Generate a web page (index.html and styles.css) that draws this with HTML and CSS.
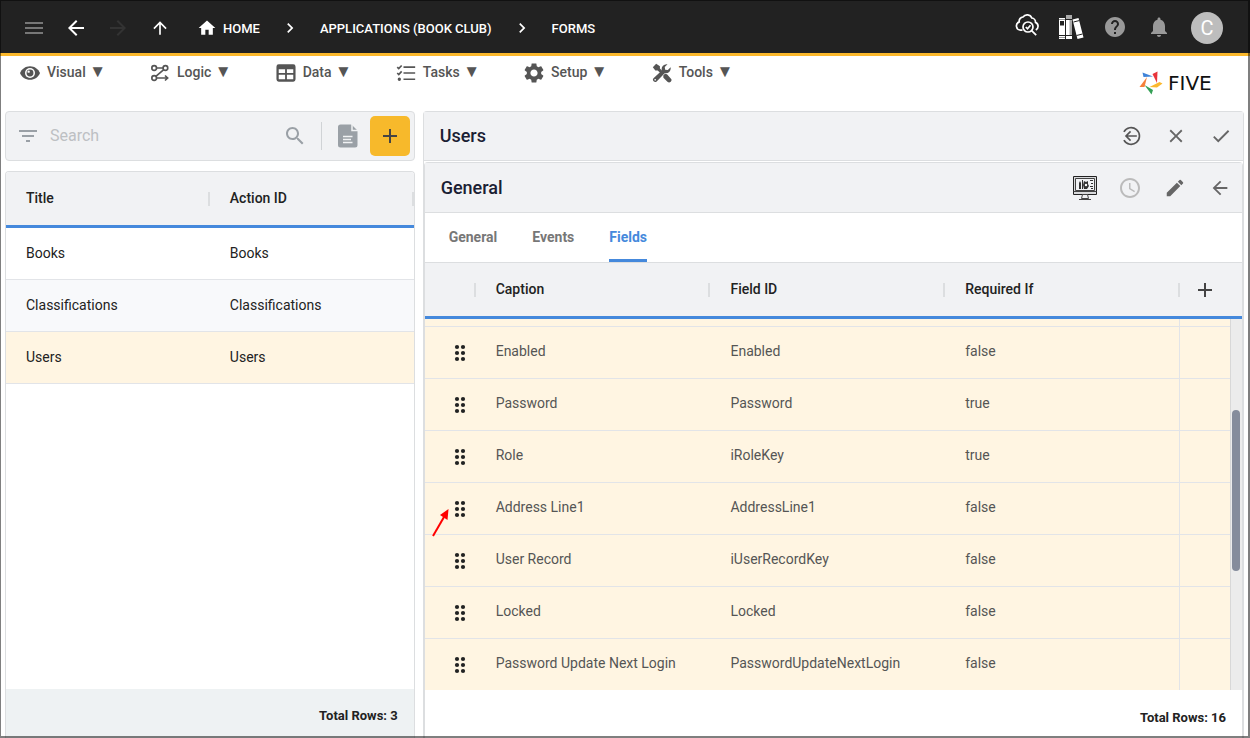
FILE: index.html
```
<!DOCTYPE html>
<html lang="en">

<head>
    <meta charset="UTF-8">
    <meta name="viewport" content="width=device-width, initial-scale=1.0">
    <title>Five - Forms</title>
    <link rel="stylesheet" href="styles.css">
</head>

<body>

    <!-- shared icons -->
    <svg class="sprite" aria-hidden="true">
        <symbol id="i-back" viewBox="0 0 24 24"><path d="M20 11H7.83l5.59-5.59L12 4l-8 8 8 8 1.41-1.41L7.83 13H20v-2z"/></symbol>
        <symbol id="i-chevron" viewBox="0 0 24 24"><path d="M10 6 8.59 7.41 13.17 12l-4.58 4.59L10 18l6-6z"/></symbol>
        <symbol id="i-add" viewBox="0 0 24 24"><path d="M19 13h-6v6h-2v-6H5v-2h6V5h2v6h6v2z"/></symbol>
        <symbol id="i-drag" viewBox="0 0 12 18">
            <circle cx="3" cy="3" r="2.1"/><circle cx="9" cy="3" r="2.1"/>
            <circle cx="3" cy="9" r="2.1"/><circle cx="9" cy="9" r="2.1"/>
            <circle cx="3" cy="15" r="2.1"/><circle cx="9" cy="15" r="2.1"/>
        </symbol>
    </svg>

    <header class="topbar">
        <nav class="topbar-nav">
            <button type="button" class="icon-btn dim" aria-label="Menu">
                <svg viewBox="0 0 24 24"><path d="M3 18h18v-2H3v2zm0-5h18v-2H3v2zm0-7v2h18V6H3z"/></svg>
            </button>
            <button type="button" class="icon-btn" aria-label="Back"><svg><use href="#i-back"/></svg></button>
            <button type="button" class="icon-btn off" aria-label="Forward">
                <svg viewBox="0 0 24 24"><path d="m12 4-1.41 1.41L16.17 11H4v2h12.17l-5.58 5.59L12 20l8-8z"/></svg>
            </button>
            <button type="button" class="icon-btn up" aria-label="Up">
                <svg viewBox="0 0 24 24"><path d="m4 12 1.41 1.41L11 7.83V20h2V7.83l5.58 5.59L20 12l-8-8-8 8z"/></svg>
            </button>
        </nav>
        <nav class="breadcrumb">
            <a href="#" class="home">
                <svg viewBox="0 0 24 24"><path d="M10 20v-6h4v6h5v-8h3L12 3 2 12h3v8z"/></svg>HOME
            </a>
            <svg><use href="#i-chevron"/></svg>
            <a href="#">APPLICATIONS (BOOK CLUB)</a>
            <svg><use href="#i-chevron"/></svg>
            <a href="#">FORMS</a>
        </nav>
        <div class="topbar-tools">
            <button type="button" class="icon-btn" aria-label="Inspect">
                <svg class="line" viewBox="0 0 24 24">
                    <path d="M7.500 17.200H5.400A4.300 4.300 0 0 1 4.200 8.900 4.200 4.200 0 0 1 8 4a5 5 0 0 1 8.800 1 4.200 4.200 0 0 1 3.700 4.400 4.200 4.200 0 0 1 .3 7.600"/>
                    <circle cx="13" cy="14" r="5"/>
                    <path d="m10.800 14 1.700 1.700 3-3.500M16.600 17.600l4.600 4.600"/>
                </svg>
            </button>
            <button type="button" class="icon-btn books" aria-label="Library">
                <svg viewBox="0 0 26 26">
                    <path fill="#fff" d="M1 4h6v21H1zM8 1h6v24H8zM14.500 5.500l6-1.500 5 19.500-6 1.500z"/>
                    <path fill="#aaa" d="M8 1h6v4H8zM11.500 6h2.500v15h-2.500z"/>
                    <path fill="#222" d="M2 7h4v4.500H2z"/>
                    <path fill="none" stroke="#222" d="M1 21.500h13M8 5.500h6M15.500 8l6-1.500M18.500 21.500l6-1.500"/>
                    <path fill="none" stroke="#999" d="M1 5.500h6M1 23.500h6"/>
                </svg>
            </button>
            <button type="button" class="icon-btn grey" aria-label="Help">
                <svg viewBox="0 0 24 24"><path d="M12 2C6.480 2 2 6.480 2 12s4.480 10 10 10 10-4.480 10-10S17.520 2 12 2zm1 17h-2v-2h2v2zm2.070-7.750-.9.920C13.450 12.900 13 13.500 13 15h-2v-.5c0-1.100.450-2.100 1.170-2.830l1.240-1.260c.370-.360.590-.860.590-1.410 0-1.100-.9-2-2-2s-2 .9-2 2H8c0-2.210 1.790-4 4-4s4 1.790 4 4c0 .880-.360 1.680-.930 2.250z"/></svg>
            </button>
            <button type="button" class="icon-btn grey" aria-label="Notifications">
                <svg viewBox="0 0 24 24"><path d="M12 22c1.100 0 2-.9 2-2h-4c0 1.100.9 2 2 2zm6-6v-5c0-3.070-1.630-5.640-4.500-6.320V4c0-.830-.670-1.500-1.500-1.500s-1.500.670-1.500 1.500v.680C7.640 5.360 6 7.920 6 11v5l-2 2v1h16v-1l-2-2z"/></svg>
            </button>
            <button type="button" class="avatar">C</button>
        </div>
    </header>

    <div class="menubar">
        <button type="button">
            <svg viewBox="1 1 22 22"><path d="M12 4.500C7 4.500 2.730 7.610 1 12c1.730 4.390 6 7.500 11 7.500s9.270-3.110 11-7.500c-1.730-4.390-6-7.500-11-7.500z"/><circle cx="12" cy="12" r="5.500" fill="#fff"/><circle cx="12" cy="12" r="3.800"/><circle cx="10.500" cy="10.500" r="1.300" fill="#fff"/></svg>
            <span>Visual <i>▼</i></span>
        </button>
        <button type="button">
            <svg class="line" viewBox="0 0 24 24">
                <circle cx="5" cy="6" r="2.800"/><circle cx="18.500" cy="6" r="2.800"/><circle cx="5" cy="18" r="2.800"/>
                <path d="M7.800 6h8M16.500 8 7 16M7.800 18H21M18 15l3.200 3-3.200 3"/>
            </svg>
            <span>Logic <i>▼</i></span>
        </button>
        <button type="button">
            <svg viewBox="1 1 22 22"><path fill-rule="evenodd" d="M4 2.500h16a2.500 2.500 0 0 1 2.500 2.500v14a2.500 2.500 0 0 1-2.500 2.500H4A2.500 2.500 0 0 1 1.500 19V5A2.500 2.500 0 0 1 4 2.500zM4 8v4h7V8zm9 0v4h7V8zm-9 6v5h7v-5zm9 0v5h7v-5z"/></svg>
            <span>Data <i>▼</i></span>
        </button>
        <button type="button">
            <svg class="line" viewBox="0 0 24 24">
                <path d="M9 5h14M9 12h14M9 19.500h14"/>
                <path d="m1.500 5 1.800 1.800L6.800 3M1.500 12l1.800 1.800L6.800 10"/>
                <circle cx="4" cy="19.500" r="1"/>
            </svg>
            <span>Tasks <i>▼</i></span>
        </button>
        <button type="button">
            <svg viewBox="2 2 20 20"><path d="M19.140 12.940c.040-.3.060-.610.060-.940 0-.320-.020-.640-.070-.940l2.030-1.580c.180-.140.230-.410.120-.610l-1.920-3.320c-.120-.220-.370-.290-.590-.220l-2.390.960c-.5-.380-1.030-.7-1.620-.940l-.360-2.540c-.040-.240-.240-.410-.480-.410h-3.840c-.240 0-.430.170-.470.410l-.360 2.540c-.590.240-1.130.570-1.620.940l-2.390-.960c-.220-.080-.470 0-.590.220L2.740 8.870c-.120.210-.080.470.120.610l2.030 1.580c-.050.3-.090.630-.090.940s.020.640.070.940l-2.030 1.580c-.180.140-.230.410-.120.610l1.920 3.320c.120.220.370.290.590.220l2.390-.960c.5.380 1.030.7 1.620.940l.360 2.540c.050.240.240.410.480.410h3.840c.240 0 .440-.170.470-.410l.360-2.540c.590-.240 1.130-.560 1.620-.940l2.390.960c.220.080.470 0 .590-.220l1.920-3.320c.120-.220.070-.470-.120-.610l-2.010-1.580zM12 15.600c-1.980 0-3.600-1.620-3.600-3.600s1.620-3.600 3.600-3.600 3.600 1.620 3.600 3.600-1.620 3.600-3.600 3.600z"/></svg>
            <span>Setup <i>▼</i></span>
        </button>
        <button type="button">
            <svg viewBox="0 0 24 24">
                <path d="M1 5 5 1l4.500 3v2.500l3 3-2.500 2.500-3.200-3H4z"/>
                <path d="m13.500 15 2-2 2.500.5 4.500 5a2.700 2.700 0 0 1-4 4l-4.800-4.800z"/>
                <path d="M22.300 5.200 19 8.500 15.800 8l-.5-3.200 3.300-3.300A6 6 0 0 0 11.800 9L1.800 18.400a2.700 2.700 0 0 0 3.800 3.800L15.200 12.300a6 6 0 0 0 7.100-7.100zM3.800 21.200a1 1 0 1 1 0-2 1 1 0 0 1 0 2z"/>
            </svg>
            <span>Tools <i>▼</i></span>
        </button>
        <a href="#" class="logo">
            <svg viewBox="0 0 24 24">
                <path fill="#3f83d8" d="M3.500 1.500 14 5.500 4.500 6z"/>
                <path fill="#e8343b" d="m18.500.5-.5 11.500-4.500-9z"/>
                <path fill="#fbb82e" d="m23.500 12.500-5.500 4-7.500-.5L20.500 11z"/>
                <path fill="#34a056" d="m5.500 14 8.500 5-1.500 4.500z"/>
                <path fill="#f5803a" d="M8 6 5.500 16 .5 16z"/>
            </svg>
            <span>FIVE</span>
        </a>
    </div>

    <main class="content">

        <section class="list-pane">
            <form class="search-card">
                <svg class="filter" viewBox="0 0 24 24"><path d="M10 18h4v-2h-4v2zM3 6v2h18V6H3zm3 7h12v-2H6v2z"/></svg>
                <input type="text" placeholder="Search" aria-label="Search">
                <button type="submit" class="icon-btn" aria-label="Search">
                    <svg viewBox="0 0 24 24"><path d="M15.500 14h-.790l-.280-.270C15.410 12.590 16 11.110 16 9.500 16 5.910 13.090 3 9.500 3S3 5.910 3 9.500 5.910 16 9.500 16c1.610 0 3.090-.590 4.230-1.570l.270.280v.790l5 4.990L20.490 19l-4.990-5zm-6 0C7.010 14 5 11.990 5 9.500S7.010 5 9.500 5 14 7.010 14 9.500 11.990 14 9.500 14z"/></svg>
                </button>
                <span class="divider"></span>
                <button type="button" class="icon-btn report" aria-label="Report">
                    <svg viewBox="0 0 24 24"><path d="M4.500.5h11l6 6V21a2.500 2.500 0 0 1-2.500 2.500H4.500A2.500 2.500 0 0 1 2 21V3A2.500 2.500 0 0 1 4.500.5z"/><path fill="none" stroke="#f1f2f4" stroke-width="1.500" d="M16 0v6.500h6M7 12.500h9.500M7 15.500h8M7 18.500h9.500"/></svg>
                </button>
                <button type="button" class="add-btn" aria-label="Add"><svg><use href="#i-add"/></svg></button>
            </form>

            <div class="list-card">
                <table>
                    <thead>
                        <tr><th>Title</th><th>Action ID</th></tr>
                    </thead>
                    <tbody>
                        <tr><td>Books</td><td>Books</td></tr>
                        <tr class="odd"><td>Classifications</td><td>Classifications</td></tr>
                        <tr class="selected"><td>Users</td><td>Users</td></tr>
                    </tbody>
                </table>
                <footer>Total Rows: 3</footer>
            </div>
        </section>

        <section class="detail-pane">
            <div class="pane-head">
                <h1>Users</h1>
                <button type="button" class="icon-btn" aria-label="Return">
                    <svg class="line" viewBox="0 0 24 24"><path d="M3.500 7a10 10 0 1 1 0 10M19 12H6M11.500 6.500 6 12l5.500 5.500"/></svg>
                </button>
                <button type="button" class="icon-btn" aria-label="Cancel">
                    <svg viewBox="0 0 24 24"><path d="M19 6.410 17.590 5 12 10.590 6.410 5 5 6.410 10.590 12 5 17.590 6.410 19 12 13.410 17.590 19 19 17.590 13.410 12z"/></svg>
                </button>
                <button type="button" class="icon-btn" aria-label="Save">
                    <svg viewBox="0 0 24 24"><path d="M9 16.170 4.830 12l-1.420 1.410L9 19 21 7l-1.410-1.410z"/></svg>
                </button>
            </div>

            <div class="detail-card">
                <div class="pane-head">
                    <h2>General</h2>
                    <button type="button" class="icon-btn monitor" aria-label="Preview">
                        <svg viewBox="0 0 26 26">
                            <path fill="#d9dadc" stroke="#222" d="M1.500 1.500h23v18h-23z"/>
                            <path fill="#f1f2f4" stroke="#444" d="M3.500 3.500h19v12h-19zM10.500 19.500h5l1 4h-7z"/>
                            <path fill="none" stroke="#444" d="M1.500 16.500h23M7 24.500h12"/>
                            <path fill="#333" d="M7 8l1-2 1 2v6H7zM10 5h1v9h-1zM12 6l2 1 2-1v3l1 2-2 3h-3l-1-4zM18 5h3v1h-3zM19 8h2v1h-2zM18 11h3v1h-3zM19 13h2v1h-2z"/>
                            <circle cx="14" cy="10" r="1.200" fill="#fff"/>
                        </svg>
                    </button>
                    <button type="button" class="icon-btn pale" aria-label="History">
                        <svg viewBox="0 0 24 24"><path d="M11.990 2C6.470 2 2 6.480 2 12s4.470 10 9.990 10C17.520 22 22 17.520 22 12S17.520 2 11.990 2zM12 20c-4.420 0-8-3.580-8-8s3.580-8 8-8 8 3.580 8 8-3.580 8-8 8zm.5-13H11v6l5.250 3.150.750-1.230-4.500-2.670z"/></svg>
                    </button>
                    <button type="button" class="icon-btn" aria-label="Edit">
                        <svg viewBox="0 0 24 24"><path d="M3 17.250V21h3.750L17.810 9.940l-3.750-3.750L3 17.250zM20.710 7.040c.390-.390.390-1.020 0-1.410l-2.340-2.340a.996.996 0 0 0-1.410 0l-1.830 1.830 3.750 3.750 1.830-1.830z"/></svg>
                    </button>
                    <button type="button" class="icon-btn" aria-label="Back"><svg><use href="#i-back"/></svg></button>
                </div>

                <nav class="tabs">
                    <button type="button">General</button>
                    <button type="button">Events</button>
                    <button type="button" class="active">Fields</button>
                </nav>

                <div class="grid">
                    <table>
                        <colgroup>
                            <col class="col-drag"><col><col><col><col class="col-add">
                        </colgroup>
                        <thead>
                            <tr>
                                <th></th>
                                <th>Caption</th>
                                <th>Field ID</th>
                                <th>Required If</th>
                                <th><button type="button" class="icon-btn" aria-label="Add field"><svg><use href="#i-add"/></svg></button></th>
                            </tr>
                        </thead>
                        <tbody>
                            <tr class="cut"><td></td><td></td><td></td><td></td><td></td></tr>
                            <tr><td><svg><use href="#i-drag"/></svg></td><td>Enabled</td><td>Enabled</td><td>false</td><td></td></tr>
                            <tr><td><svg><use href="#i-drag"/></svg></td><td>Password</td><td>Password</td><td>true</td><td></td></tr>
                            <tr><td><svg><use href="#i-drag"/></svg></td><td>Role</td><td>iRoleKey</td><td>true</td><td></td></tr>
                            <tr>
                                <td class="marked">
                                    <svg><use href="#i-drag"/></svg>
                                    <svg class="pointer" viewBox="0 0 20 30"><path fill="none" stroke="#f00" stroke-width="2" d="M2 28 13 9"/><path fill="#f00" d="m17.500 1-8.500 6 7.500 5z"/></svg>
                                </td>
                                <td>Address Line1</td><td>AddressLine1</td><td>false</td><td></td>
                            </tr>
                            <tr><td><svg><use href="#i-drag"/></svg></td><td>User Record</td><td>iUserRecordKey</td><td>false</td><td></td></tr>
                            <tr><td><svg><use href="#i-drag"/></svg></td><td>Locked</td><td>Locked</td><td>false</td><td></td></tr>
                            <tr><td><svg><use href="#i-drag"/></svg></td><td>Password Update Next Login</td><td>PasswordUpdateNextLogin</td><td>false</td><td></td></tr>
                        </tbody>
                    </table>
                    <div class="scrollbar"><div class="thumb"></div></div>
                </div>
                <footer>Total Rows: 16</footer>
            </div>
        </section>

    </main>

</body>

</html>
```

FILE: styles.css
```
* {
    box-sizing: border-box;
}

body {
    margin: 0;
    height: 100vh;
    display: flex;
    flex-direction: column;
    overflow: hidden;
    background-color: #fff;
    color: #222;
    font-family: Roboto, "Liberation Sans", sans-serif;
    font-size: 14px;
}

/* window outline */
body::after {
    content: "";
    position: fixed;
    inset: 0;
    border: solid rgba(0, 0, 0, 0.5);
    border-width: 1px 2px 2px 1px;
    pointer-events: none;
    z-index: 5;
}

button {
    border: none;
    padding: 0;
    background: none;
    color: inherit;
    font: inherit;
    cursor: pointer;
}

a {
    color: inherit;
    text-decoration: none;
}

svg {
    display: block;
    flex: none;
    width: 24px;
    height: 24px;
    fill: currentColor;
}

svg.line {
    fill: none;
    stroke: currentColor;
    stroke-width: 2;
}

.sprite {
    position: absolute;
    width: 0;
    height: 0;
}

.icon-btn {
    display: flex;
    align-items: center;
    justify-content: center;
    flex: none;
    width: 44px;
    height: 40px;
}

/* top bar */
.topbar {
    display: flex;
    align-items: center;
    flex: none;
    height: 56px;
    padding: 0 22px 0 12px;
    background-color: #222;
    border-bottom: 3px solid #fbb82b;
    color: #fff;
}

.topbar-nav {
    display: flex;
    padding-top: 3px;
}

.topbar-nav .icon-btn {
    width: 42px;
}

.topbar .up svg {
    width: 20px;
    height: 20px;
}

.topbar-nav .dim {
    width: 43px;
    color: #777;
}

.topbar .off {
    color: #333;
}

.breadcrumb {
    display: flex;
    align-items: center;
    gap: 18px;
    padding-top: 3px;
    margin-left: 16px;
    font-size: 13px;
    font-weight: 500;
}

.breadcrumb .home {
    display: flex;
    align-items: center;
    gap: 6px;
}

.breadcrumb svg {
    width: 20px;
    height: 20px;
}

.breadcrumb > svg {
    margin: 0 2px;
}

.topbar-tools {
    display: flex;
    align-items: center;
    margin-left: auto;
}

.topbar-tools svg.line {
    margin-bottom: 4px;
    stroke-width: 1.7;
}

.books svg,
.monitor svg {
    width: 26px;
    height: 26px;
}

.topbar-tools .grey {
    color: #999;
}

.avatar {
    width: 32px;
    height: 32px;
    margin: 2px 5px 0 10px;
    border-radius: 50%;
    background-color: #bdbdbd;
    font-size: 20px;
}

/* menu bar */
.menubar {
    display: flex;
    align-items: flex-start;
    gap: 44px;
    flex: none;
    height: 55px;
    padding: 7px 22px 0 20px;
    color: #555;
}

.menubar button {
    display: flex;
    align-items: center;
    gap: 7px;
    font-weight: 500;
}

.menubar button span {
    height: 20px;
    line-height: 18px;
}

.menubar i {
    font-size: 17px;
    font-style: normal;
    line-height: 1;
}

.menubar svg {
    width: 20px;
    height: 20px;
}

.logo {
    display: flex;
    align-items: center;
    gap: 5px;
    width: 89px;
    margin: 8px 0 0 auto;
    color: #111;
    font-family: "DejaVu Sans", sans-serif;
    font-size: 20px;
}

.menubar .logo svg {
    width: 24px;
    height: 24px;
}

/* panes */
.content {
    display: flex;
    flex: 1;
    gap: 8px;
    min-height: 0;
    padding: 0 6px 0 5px;
}

.list-pane {
    display: flex;
    flex-direction: column;
    flex: 1;
    gap: 10px;
}

.search-card {
    display: flex;
    align-items: center;
    flex: none;
    height: 50px;
    padding: 0 4px 0 10px;
    border: 1px solid #dcdee0;
    border-radius: 4px;
    background-color: #f1f2f4;
    color: #9aa0a6;
}

.search-card input {
    flex: 1;
    min-width: 0;
    padding: 0 10px 2px;
    border: none;
    outline: none;
    background: none;
    font: inherit;
    font-size: 16px;
}

.search-card input::placeholder {
    color: #bdc0c3;
}

.divider {
    width: 1px;
    height: 28px;
    margin-left: 4px;
    background-color: #d0d3d6;
}

.search-card .report {
    width: 48px;
    padding-left: 4px;
}

.add-btn {
    display: flex;
    align-items: center;
    justify-content: center;
    width: 40px;
    height: 40px;
    border-radius: 5px;
    background-color: #f7b92b;
    color: #444;
}

.list-card {
    display: flex;
    flex-direction: column;
    flex: 1;
    border: 1px solid #dcdee0;
    border-bottom: none;
    border-radius: 4px 4px 0 0;
    overflow: hidden;
}

footer {
    flex: none;
    height: 48px;
    padding: 0 16px;
    font-size: 13px;
    font-weight: 700;
    line-height: 55px;
    text-align: right;
}

.list-card footer {
    height: 49px;
    margin-top: auto;
    background-color: #eef2f3;
    line-height: 53px;
}

/* tables */
table {
    width: 100%;
    table-layout: fixed;
    border-collapse: separate;
    border-spacing: 0;
}

th,
td {
    height: 52px;
    padding: 0 20px 2px;
    text-align: left;
    border-bottom: 1px solid #e2e4e8;
    white-space: nowrap;
}

th {
    height: 56px;
    font-weight: 500;
    background: linear-gradient(#dcdee0, #dcdee0) right center / 2px 14px no-repeat #f1f2f4;
    border-bottom: 3px solid #4589dc;
}

.odd td {
    background-color: #f8f9fb;
}

.selected td {
    background-color: #fff5e2;
}

/* detail */
.detail-pane {
    display: flex;
    flex-direction: column;
    flex: 2;
    border: 1px solid #dcdee0;
    border-bottom: none;
    border-radius: 4px 4px 0 0;
}

.pane-head {
    display: flex;
    align-items: center;
    flex: none;
    height: 49px;
    padding: 0 0 0 16px;
    background-color: #f1f2f4;
    border-bottom: 1px solid #dcdee0;
    color: #666;
}

.pane-head h1,
.pane-head h2 {
    flex: 1;
    margin: 0;
    color: #1a2033;
    font-size: 18px;
    font-weight: 500;
}

.pane-head h1 {
    padding-bottom: 2px;
}

.pane-head svg {
    width: 22px;
    height: 22px;
}

.pane-head svg.line {
    width: 20px;
    height: 20px;
    color: #555;
    overflow: visible;
}

.pane-head .icon-btn {
    width: 45px;
}

.pane-head .monitor svg {
    width: 26px;
    height: 26px;
}

.pane-head .pale svg {
    width: 24px;
    height: 24px;
    color: #bbb;
}

.detail-card {
    display: flex;
    flex-direction: column;
    flex: 1;
    min-height: 0;
    margin-top: 1px;
    border: 1px solid #dcdee0;
    border-bottom: none;
    border-radius: 4px 4px 0 0;
}

.detail-card .pane-head {
    height: 50px;
}

.tabs {
    display: flex;
    gap: 35px;
    flex: none;
    height: 50px;
    padding: 0 24px;
    border-bottom: 1px solid #dcdee0;
    color: #777;
}

.tabs button {
    border-bottom: 3px solid transparent;
    padding-top: 2px;
    font-weight: 700;
}

.tabs .active {
    color: #4589dc;
    border-color: #4589dc;
    border-radius: 2px 2px 0 0;
}

.grid {
    position: relative;
    flex: 1;
    min-height: 0;
    overflow: hidden;
}

.col-drag {
    width: 51px;
}

.col-add {
    width: 62px;
}

.grid td {
    padding-bottom: 4px;
    background-color: #fff5e2;
    color: #555;
}

.grid td:first-child {
    padding: 0 0 0 29px;
    color: #222;
}

.grid td:nth-child(4) {
    border-right: 1px solid #e2e4e8;
}

.grid td svg {
    width: 12px;
    height: 18px;
}

.grid .cut td {
    height: 8px;
}

.grid th:last-child {
    padding: 0 0 0 3px;
    background-image: none;
    color: #444;
}

.grid .marked {
    position: relative;
}

.grid .marked .pointer {
    position: absolute;
    left: 6px;
    top: 25px;
    width: 20px;
    height: 30px;
    overflow: visible;
}

.scrollbar {
    position: absolute;
    top: 56px;
    right: 0;
    bottom: 0;
    width: 12px;
    padding: 91px 2px 0 1px;
    border-left: 1px solid #d8d8d8;
    background-color: #ececec;
}

.thumb {
    height: 161px;
    border-radius: 4px;
    background-color: #858c9c;
}
```
